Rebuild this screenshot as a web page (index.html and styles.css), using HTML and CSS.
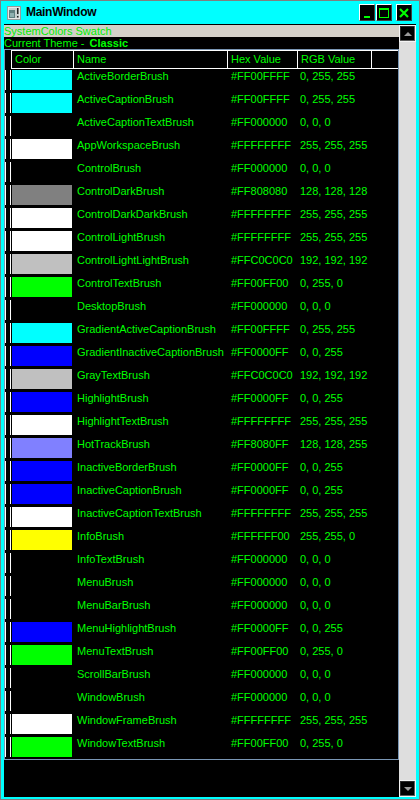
FILE: index.html
```html
<!DOCTYPE html>
<html>
<head>
<meta charset="utf-8">
<link rel="stylesheet" href="styles.css">
</head>
<body>
<div class="window">
  <div class="titlebar">
    <svg class="app-icon" width="14" height="14" viewBox="0 0 14 14">
      <rect x="0.5" y="0.5" width="13" height="13" fill="#e8e8e8" stroke="#9a9a9a"/>
      <rect x="2" y="2" width="10" height="10" fill="#c8d0d0"/>
      <rect x="2" y="4" width="6" height="8" fill="#5f7f80"/>
      <rect x="3" y="7" width="4" height="4" fill="#8fb0b0"/>
      <rect x="10" y="2" width="1.5" height="6" fill="#202020"/>
      <rect x="10" y="10" width="1.5" height="1.5" fill="#202020"/>
    </svg>
    <span class="title">MainWindow</span>
    <div class="controls">
      <div class="cbtn">
        <svg width="14" height="15" viewBox="0 0 14 15"><rect x="4" y="11" width="6" height="2" fill="#00ff00"/></svg>
      </div>
      <div class="cbtn">
        <svg width="14" height="15" viewBox="0 0 14 15"><path d="M2 3h10v10H2z M3 5v7h8V5z" fill="#00ff00" fill-rule="evenodd"/></svg>
      </div>
      <div class="cbtn close">
        <svg width="14" height="15" viewBox="0 0 14 15"><path d="M3 4l8 8M11 4l-8 8" stroke="#00ff00" stroke-width="2.2"/></svg>
      </div>
    </div>
  </div>
  <div class="client">
    <div class="main">
      <div class="caption">SystemColors Swatch</div>
      <div class="theme">Current Theme - <b>Classic</b></div>
      <div class="list">
        <div class="header">
          <div class="hrow-head"></div>
          <div class="hcell c-color">Color</div>
          <div class="hcell c-name">Name</div>
          <div class="hcell c-hex">Hex Value</div>
          <div class="hcell c-rgb">RGB Value</div>
          <div class="hcell c-fill"></div>
        </div>
        <div class="row"><div class="rh"></div><div class="c-color"><div class="swatch" style="background:#00FFFF"></div></div><div class="c-name">ActiveBorderBrush</div><div class="c-hex">#FF00FFFF</div><div class="c-rgb">0, 255, 255</div></div>
        <div class="row"><div class="rh"></div><div class="c-color"><div class="swatch" style="background:#00FFFF"></div></div><div class="c-name">ActiveCaptionBrush</div><div class="c-hex">#FF00FFFF</div><div class="c-rgb">0, 255, 255</div></div>
        <div class="row"><div class="rh"></div><div class="c-color"><div class="swatch" style="background:#000000"></div></div><div class="c-name">ActiveCaptionTextBrush</div><div class="c-hex">#FF000000</div><div class="c-rgb">0, 0, 0</div></div>
        <div class="row"><div class="rh"></div><div class="c-color"><div class="swatch" style="background:#FFFFFF"></div></div><div class="c-name">AppWorkspaceBrush</div><div class="c-hex">#FFFFFFFF</div><div class="c-rgb">255, 255, 255</div></div>
        <div class="row"><div class="rh"></div><div class="c-color"><div class="swatch" style="background:#000000"></div></div><div class="c-name">ControlBrush</div><div class="c-hex">#FF000000</div><div class="c-rgb">0, 0, 0</div></div>
        <div class="row"><div class="rh"></div><div class="c-color"><div class="swatch" style="background:#808080"></div></div><div class="c-name">ControlDarkBrush</div><div class="c-hex">#FF808080</div><div class="c-rgb">128, 128, 128</div></div>
        <div class="row"><div class="rh"></div><div class="c-color"><div class="swatch" style="background:#FFFFFF"></div></div><div class="c-name">ControlDarkDarkBrush</div><div class="c-hex">#FFFFFFFF</div><div class="c-rgb">255, 255, 255</div></div>
        <div class="row"><div class="rh"></div><div class="c-color"><div class="swatch" style="background:#FFFFFF"></div></div><div class="c-name">ControlLightBrush</div><div class="c-hex">#FFFFFFFF</div><div class="c-rgb">255, 255, 255</div></div>
        <div class="row"><div class="rh"></div><div class="c-color"><div class="swatch" style="background:#C0C0C0"></div></div><div class="c-name">ControlLightLightBrush</div><div class="c-hex">#FFC0C0C0</div><div class="c-rgb">192, 192, 192</div></div>
        <div class="row"><div class="rh"></div><div class="c-color"><div class="swatch" style="background:#00FF00"></div></div><div class="c-name">ControlTextBrush</div><div class="c-hex">#FF00FF00</div><div class="c-rgb">0, 255, 0</div></div>
        <div class="row"><div class="rh"></div><div class="c-color"><div class="swatch" style="background:#000000"></div></div><div class="c-name">DesktopBrush</div><div class="c-hex">#FF000000</div><div class="c-rgb">0, 0, 0</div></div>
        <div class="row"><div class="rh"></div><div class="c-color"><div class="swatch" style="background:#00FFFF"></div></div><div class="c-name">GradientActiveCaptionBrush</div><div class="c-hex">#FF00FFFF</div><div class="c-rgb">0, 255, 255</div></div>
        <div class="row"><div class="rh"></div><div class="c-color"><div class="swatch" style="background:#0000FF"></div></div><div class="c-name">GradientInactiveCaptionBrush</div><div class="c-hex">#FF0000FF</div><div class="c-rgb">0, 0, 255</div></div>
        <div class="row"><div class="rh"></div><div class="c-color"><div class="swatch" style="background:#C0C0C0"></div></div><div class="c-name">GrayTextBrush</div><div class="c-hex">#FFC0C0C0</div><div class="c-rgb">192, 192, 192</div></div>
        <div class="row"><div class="rh"></div><div class="c-color"><div class="swatch" style="background:#0000FF"></div></div><div class="c-name">HighlightBrush</div><div class="c-hex">#FF0000FF</div><div class="c-rgb">0, 0, 255</div></div>
        <div class="row"><div class="rh"></div><div class="c-color"><div class="swatch" style="background:#FFFFFF"></div></div><div class="c-name">HighlightTextBrush</div><div class="c-hex">#FFFFFFFF</div><div class="c-rgb">255, 255, 255</div></div>
        <div class="row"><div class="rh"></div><div class="c-color"><div class="swatch" style="background:#8080FF"></div></div><div class="c-name">HotTrackBrush</div><div class="c-hex">#FF8080FF</div><div class="c-rgb">128, 128, 255</div></div>
        <div class="row"><div class="rh"></div><div class="c-color"><div class="swatch" style="background:#0000FF"></div></div><div class="c-name">InactiveBorderBrush</div><div class="c-hex">#FF0000FF</div><div class="c-rgb">0, 0, 255</div></div>
        <div class="row"><div class="rh"></div><div class="c-color"><div class="swatch" style="background:#0000FF"></div></div><div class="c-name">InactiveCaptionBrush</div><div class="c-hex">#FF0000FF</div><div class="c-rgb">0, 0, 255</div></div>
        <div class="row"><div class="rh"></div><div class="c-color"><div class="swatch" style="background:#FFFFFF"></div></div><div class="c-name">InactiveCaptionTextBrush</div><div class="c-hex">#FFFFFFFF</div><div class="c-rgb">255, 255, 255</div></div>
        <div class="row"><div class="rh"></div><div class="c-color"><div class="swatch" style="background:#FFFF00"></div></div><div class="c-name">InfoBrush</div><div class="c-hex">#FFFFFF00</div><div class="c-rgb">255, 255, 0</div></div>
        <div class="row"><div class="rh"></div><div class="c-color"><div class="swatch" style="background:#000000"></div></div><div class="c-name">InfoTextBrush</div><div class="c-hex">#FF000000</div><div class="c-rgb">0, 0, 0</div></div>
        <div class="row"><div class="rh"></div><div class="c-color"><div class="swatch" style="background:#000000"></div></div><div class="c-name">MenuBrush</div><div class="c-hex">#FF000000</div><div class="c-rgb">0, 0, 0</div></div>
        <div class="row"><div class="rh"></div><div class="c-color"><div class="swatch" style="background:#000000"></div></div><div class="c-name">MenuBarBrush</div><div class="c-hex">#FF000000</div><div class="c-rgb">0, 0, 0</div></div>
        <div class="row"><div class="rh"></div><div class="c-color"><div class="swatch" style="background:#0000FF"></div></div><div class="c-name">MenuHighlightBrush</div><div class="c-hex">#FF0000FF</div><div class="c-rgb">0, 0, 255</div></div>
        <div class="row"><div class="rh"></div><div class="c-color"><div class="swatch" style="background:#00FF00"></div></div><div class="c-name">MenuTextBrush</div><div class="c-hex">#FF00FF00</div><div class="c-rgb">0, 255, 0</div></div>
        <div class="row"><div class="rh"></div><div class="c-color"><div class="swatch" style="background:#000000"></div></div><div class="c-name">ScrollBarBrush</div><div class="c-hex">#FF000000</div><div class="c-rgb">0, 0, 0</div></div>
        <div class="row"><div class="rh"></div><div class="c-color"><div class="swatch" style="background:#000000"></div></div><div class="c-name">WindowBrush</div><div class="c-hex">#FF000000</div><div class="c-rgb">0, 0, 0</div></div>
        <div class="row"><div class="rh"></div><div class="c-color"><div class="swatch" style="background:#FFFFFF"></div></div><div class="c-name">WindowFrameBrush</div><div class="c-hex">#FFFFFFFF</div><div class="c-rgb">255, 255, 255</div></div>
        <div class="row"><div class="rh"></div><div class="c-color"><div class="swatch" style="background:#00FF00"></div></div><div class="c-name">WindowTextBrush</div><div class="c-hex">#FF00FF00</div><div class="c-rgb">0, 255, 0</div></div>
      </div>
    </div>
    <div class="scrollbar">
      <div class="sbtn"><span class="arrow up"></span></div>
      <div class="track"></div>
      <div class="sbtn"><span class="arrow down"></span></div>
    </div>
  </div>
</div>
</body>
</html>
```

FILE: styles.css
```css
html, body {
  margin: 0;
  padding: 0;
  background: #000;
}
body {
  font-family: "Liberation Sans", Arial, sans-serif;
  font-size: 11px;
  line-height: 13px;
  color: #00ff00;
}
.window {
  width: 420px;
  height: 800px;
  box-sizing: border-box;
  border: 1px solid #7f7f7f;
  background: #00ffff;
  padding: 0 3px 2px 3px;
  display: flex;
  flex-direction: column;
}
.titlebar {
  flex: none;
  height: 23px;
  display: flex;
  align-items: center;
}
.app-icon {
  margin-left: 3px;
  flex: none;
}
.title {
  margin-left: 5px;
  font-weight: bold;
  font-size: 12px;
  letter-spacing: -0.3px;
  color: #000;
}
.controls {
  margin-left: auto;
  margin-right: 4px;
  display: flex;
  gap: 1px;
}
.cbtn {
  width: 16px;
  height: 17px;
  box-sizing: border-box;
  background: #000;
  border: 1px solid;
  border-color: #ffffff #404040 #404040 #ffffff;
  display: flex;
  align-items: center;
  justify-content: center;
}
.cbtn.close {
  margin-left: 3px;
}
.client {
  flex: 1;
  display: flex;
  border-top: 1px solid #000;
  background: #000;
  min-height: 0;
}
.main {
  flex: 1;
  min-width: 0;
  display: flex;
  flex-direction: column;
}
.caption {
  height: 12px;
  line-height: 12px;
  background: #d4d0c8;
  color: #00ee00;
  white-space: nowrap;
}
.theme {
  height: 12px;
  line-height: 12px;
  white-space: nowrap;
}
.theme b {
  margin-left: 2px;
}
.list {
  border: 1px solid #7a97b5;
  display: flex;
  flex-direction: column;
}
.header {
  display: flex;
  height: 19px;
}
.hrow-head {
  width: 6px;
  flex: none;
}
.hcell {
  box-sizing: border-box;
  height: 19px;
  border-top: 1px solid #fff;
  border-left: 1px solid #fff;
  border-bottom: 1px solid #fff;
  padding: 2px 0 0 3px;
  white-space: nowrap;
}
.c-color { width: 62px; flex: none; box-sizing: border-box; }
.c-name { width: 154px; flex: none; box-sizing: border-box; }
.c-hex { width: 70px; flex: none; box-sizing: border-box; }
.c-rgb { width: 74px; flex: none; box-sizing: border-box; }
.c-fill { width: 27px; flex: none; }
.row {
  display: flex;
  height: 23px;
  white-space: nowrap;
}
.rh {
  width: 6px;
  height: 20px;
  margin-top: 1px;
  box-sizing: border-box;
  border-left: 1px solid #fff;
  border-right: 1px solid #fff;
  flex: none;
}
.row .c-color {
  padding: 1px 0 0 1px;
}
.swatch {
  width: 60px;
  height: 20px;
}
.row .c-name,
.row .c-hex {
  padding: 1px 0 0 4px;
}
.row .c-rgb {
  padding: 1px 0 0 3px;
}
.scrollbar {
  width: 17px;
  flex: none;
  background: #dedede;
  display: flex;
  flex-direction: column;
}
.track {
  flex: 1;
}
.sbtn {
  width: 17px;
  height: 17px;
  box-sizing: border-box;
  background: #000;
  border: 1px solid #f4f4f4;
  box-shadow: inset -1px -1px 0 #5a5a5a, inset 1px 1px 0 #2a2a2a;
  display: flex;
  align-items: center;
  justify-content: center;
}
.arrow {
  width: 0;
  height: 0;
  border-left: 4px solid transparent;
  border-right: 4px solid transparent;
}
.arrow.up {
  border-bottom: 4px solid #9a9a9a;
}
.arrow.down {
  border-top: 4px solid #9a9a9a;
}
```
